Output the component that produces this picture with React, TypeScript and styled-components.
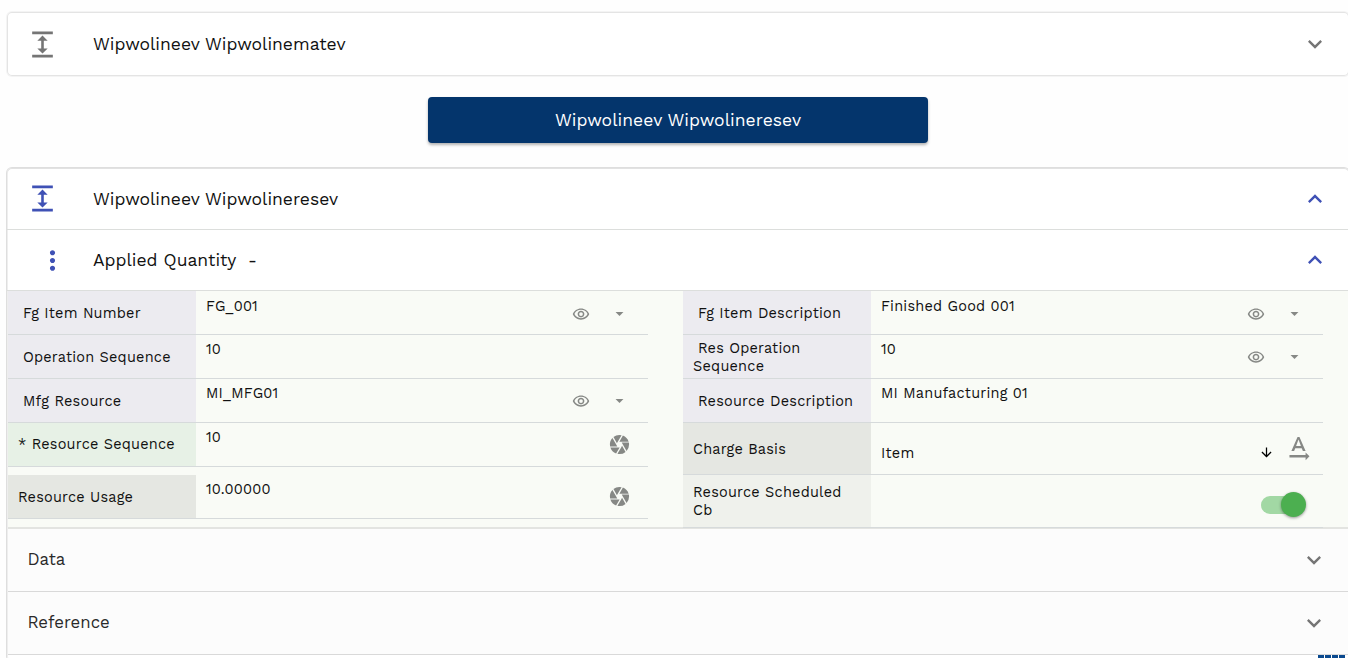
import React from 'react';
import styled, { createGlobalStyle, css } from 'styled-components';
import {
  MdArrowDownward,
  MdArrowDropDown,
  MdCamera,
  MdExpand,
  MdExpandLess,
  MdExpandMore,
  MdMoreVert,
  MdOutlineRemoveRedEye,
  MdTextRotationNone,
} from 'react-icons/md';

const GlobalStyle = createGlobalStyle`
  * { box-sizing: border-box; }
  html, body { height: 100%; overflow: hidden; }
  body {
    margin: 0;
    background: #fefefe;
    color: #111;
    font-family: 'Work Sans', Inter, 'Liberation Sans', sans-serif;
    font-weight: 400;
  }
  svg { display: block; flex: none; }
`;

const Page = styled.main`
  display: flex;
  flex-direction: column;
  width: 1350px;
  height: 658px;
  padding: 12px 0 0 7px;
  overflow: hidden;
`;

const Card = styled.section<{ $open?: boolean }>`
  flex: none;
  width: 1342px;
  background: #fff;
  border-radius: 5px;
  box-shadow: inset 0 0 0 1px #e4e4e4, 0 0 0 1px #f4f4f4;
  ${(p) => p.$open && css`
    margin-top: 25px;
    box-shadow: 0 0 0 1px #dedede, inset 0 1px 0 #e2e2e2, inset 1px 0 0 #eeeeee;
  `}
`;

const Header = styled.header<{ $height: number; $line?: boolean }>`
  display: flex;
  align-items: center;
  height: ${(p) => p.$height}px;
  padding-right: 20px;
  border-bottom: ${(p) => (p.$line ? '1px solid #dcdedc' : '0')};
`;

const Lead = styled.span<{ $inset: number; $active?: boolean }>`
  display: flex;
  width: 86px;
  padding-left: ${(p) => p.$inset}px;
  color: ${(p) => (p.$active ? '#3f51b5' : '#757575')};
`;

const Title = styled.h2`
  flex: 1;
  margin: 0;
  font-size: 17.5px;
  font-weight: 400;
  line-height: 24px;
  white-space: pre;
`;

const Toggle = styled.span<{ $active?: boolean }>`
  display: flex;
  color: ${(p) => (p.$active ? '#3f51b5' : '#757575')};
`;

const ActionButton = styled.button`
  align-self: flex-start;
  flex: none;
  width: 500px;
  height: 46px;
  margin: 21px 0 0 421px;
  border: 0;
  border-radius: 4px;
  background: #04356c;
  color: #fff;
  font: 400 17.5px/24px 'Work Sans', Inter, 'Liberation Sans', sans-serif;
  letter-spacing: 0.04px;
  box-shadow: 0 2px 3px rgba(0, 0, 0, 0.3);
`;

const Details = styled.div`
  display: flex;
  gap: 35px;
  height: 238px;
  margin-left: 1px;
  background: #f9fbf6;
  border-bottom: 2px solid #e3e4e1;
`;

const Column = styled.div`
  display: flex;
  flex-direction: column;
  width: 640px;
`;

const Row = styled.div<{ $height: number; $gap?: number }>`
  display: flex;
  flex: none;
  height: ${(p) => p.$height}px;
  margin-top: ${(p) => p.$gap ?? 0}px;
  border-bottom: 1px solid #d6dadb;
`;

const tones = { violet: '#ecebf0', green: '#e7f1e6', grey: '#e5e7e2', pale: '#eff1ec' };

const Label = styled.div<{ $tone: keyof typeof tones }>`
  display: flex;
  align-items: center;
  width: 188px;
  padding: ${(p) => (p.$tone === 'green' ? 0 : 2)}px 10px 0;
  background: ${(p) => tones[p.$tone]};
  font-size: 14.5px;
  line-height: 18px;
  white-space: pre-line;
  letter-spacing: 0.21px;
`;

const LabelText = styled.span<{ $indent?: boolean }>`
  display: block;
  text-indent: ${(p) => (p.$indent ? 5 : 0)}px;
`;

const Value = styled.div<{ $top: number }>`
  flex: 1;
  padding: ${(p) => p.$top}px 0 0 10px;
  font-size: 14.5px;
  line-height: 18px;
  white-space: nowrap;
  letter-spacing: 0.22px;
`;

const Actions = styled.div<{ $gap: number; $right: number; $top?: number }>`
  display: flex;
  align-items: center;
  gap: ${(p) => p.$gap}px;
  padding: ${(p) => p.$top ?? 0}px ${(p) => p.$right}px 0 0;
  color: #868885;
`;

const SelectArrow = styled.span`
  display: flex;
  padding-top: 7px;
  color: #000;
`;

const Track = styled.div`
  display: flex;
  align-items: center;
  width: 44px;
  height: 18px;
  border-radius: 9px;
  background: #a2d8a4;
`;

const Knob = styled.span`
  flex: none;
  width: 25px;
  height: 25px;
  margin-left: 20px;
  border-radius: 50%;
  background: #4caf50;
  box-shadow: 0 1px 3px rgba(0, 0, 0, 0.4);
`;

const Section = styled.div`
  display: flex;
  align-items: center;
  justify-content: space-between;
  height: 63px;
  margin-left: 1px;
  padding: 0 21px 0 19.5px;
  background: #fcfcfc;
  border-bottom: 1px solid #d9d9d9;
  color: #2a2a2a;
`;

const SectionName = styled.h3`
  margin: 0 0 2px;
  font-size: 16.8px;
  font-weight: 400;
`;

const Dots = styled.div`
  display: flex;
  gap: 1px;
  margin: 0 0 0 1310.5px;
`;

const Dot = styled.span`
  width: 6px;
  height: 6px;
  background: #0b4a8f;
`;

type FieldProps = {
  label: string;
  value?: string;
  tone?: keyof typeof tones;
  height?: number;
  gap?: number;
  top?: number;
  indent?: boolean;
  children?: React.ReactNode;
};

function Field({
  label, value, tone = 'violet', height = 44, gap, top = 6, indent, children,
}: FieldProps) {
  return (
    <Row $height={height} $gap={gap}>
      <Label $tone={tone}>
        <LabelText $indent={indent}>{label}</LabelText>
      </Label>
      <Value $top={top}>{value}</Value>
      {children}
    </Row>
  );
}

const Lookup = ({ top = 0 }: { top?: number }) => (
  <Actions $gap={20} $right={19} $top={top}>
    <MdOutlineRemoveRedEye size={18} />
    <MdArrowDropDown size={19} />
  </Actions>
);

const Shutter = () => (
  <Actions $gap={0} $right={17}>
    <MdCamera size={23} />
  </Actions>
);

export default function App() {
  return (
    <>
      <GlobalStyle />
      <Page>
        <Card>
          <Header $height={64}>
            <Lead $inset={20}><MdExpand size={31} /></Lead>
            <Title>Wipwolineev Wipwolinematev</Title>
            <Toggle><MdExpandMore size={28} /></Toggle>
          </Header>
        </Card>
        <ActionButton>Wipwolineev Wipwolineresev</ActionButton>
        <Card $open>
          <Header $height={62} $line>
            <Lead $inset={20} $active><MdExpand size={31} /></Lead>
            <Title>Wipwolineev Wipwolineresev</Title>
            <Toggle $active><MdExpandLess size={28} /></Toggle>
          </Header>
          <Header $height={61} $line>
            <Lead $inset={30} $active><MdMoreVert size={31} /></Lead>
            <Title>{'Applied Quantity  -'}</Title>
            <Toggle $active><MdExpandLess size={28} /></Toggle>
          </Header>
          <Details>
            <Column>
              <Field label="Fg Item Number" value="FG_001" top={7} indent><Lookup top={2} /></Field>
              <Field label="Operation Sequence" value="10" indent />
              <Field label="Mfg Resource" value="MI_MFG01" indent><Lookup /></Field>
              <Field label="* Resource Sequence" value="10" tone="green"><Shutter /></Field>
              <Field label="Resource Usage" value="10.00000" tone="grey" gap={8}><Shutter /></Field>
            </Column>
            <Column>
              <Field label="Fg Item Description" value="Finished Good 001" top={7} indent><Lookup top={2} /></Field>
              <Field label={'Res Operation\nSequence'} value="10" indent><Lookup /></Field>
              <Field label="Resource Description" value="MI Manufacturing 01" indent />
              <Field label="Charge Basis" value="Item" tone="grey" height={52} top={22}>
                <Actions $gap={9} $right={9}>
                  <SelectArrow><MdArrowDownward size={15} /></SelectArrow>
                  <MdTextRotationNone size={31} />
                </Actions>
              </Field>
              <Field label={'Resource Scheduled\nCb'} tone="pale" height={53}>
                <Actions $gap={0} $right={18} $top={7}>
                  <Track><Knob /></Track>
                </Actions>
              </Field>
            </Column>
          </Details>
          <Section>
            <SectionName>Data</SectionName>
            <MdExpandMore size={28} color="#757575" />
          </Section>
          <Section>
            <SectionName>Reference</SectionName>
            <MdExpandMore size={28} color="#757575" />
          </Section>
          <Dots><Dot /><Dot /><Dot /><Dot /></Dots>
        </Card>
      </Page>
    </>
  );
}
